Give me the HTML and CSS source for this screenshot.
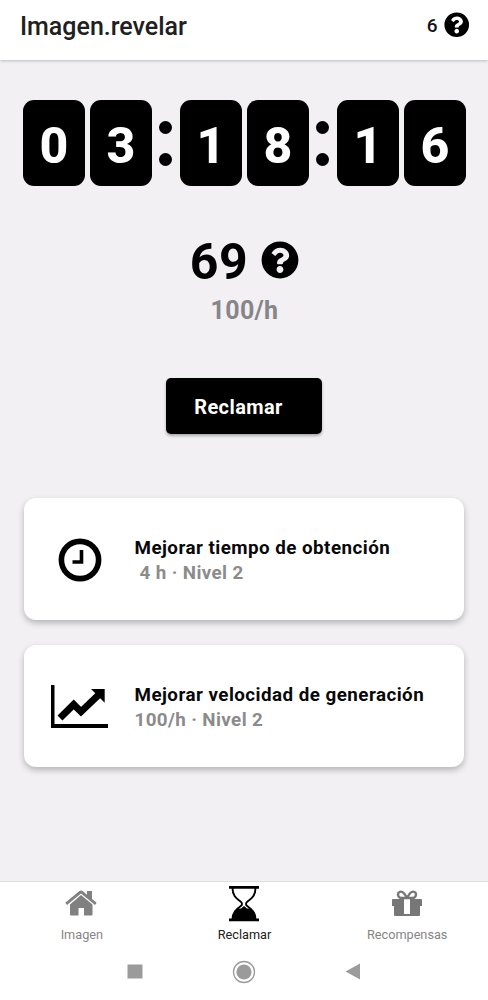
FILE: index.html
```html
<!DOCTYPE html>
<html lang="es">
<head>
<meta charset="utf-8">
<title>Imagen.revelar</title>
<link rel="stylesheet" href="styles.css">
</head>
<body>
<svg width="0" height="0" class="defs">
  <symbol id="question" viewBox="0 0 512 512"><path fill="currentColor" d="M504 256c0 137-111 248-248 248S8 393 8 256C8 119.100 119 8 256 8s248 111.100 248 248zM262.700 90c-54.500 0-89.300 23-116.500 63.800-3.500 5.300-2.400 12.400 2.700 16.300l34.700 26.300c5.200 3.900 12.600 3 16.700-2.100 17.900-22.700 30.100-35.800 57.300-35.800 20.400 0 45.700 13.100 45.700 33 0 15-12.400 22.700-32.500 34C247.100 238.500 216 254.900 216 296v4c0 6.600 5.400 12 12 12h56c6.600 0 12-5.400 12-12v-1.300c0-28.500 83.200-29.600 83.200-106.700 0-58-60.200-102-116.500-102zM256 338c-25.400 0-46 20.600-46 46s20.600 46 46 46 46-20.600 46-46-20.600-46-46-46z"/></symbol>
</svg>
<header class="topbar">
  <h1 class="title">Imagen.revelar</h1>
  <div class="balance"><span>6</span><svg class="balance-icon"><use href="#question"/></svg></div>
</header>
<main class="content">
  <div class="timer">
    <div class="digit">0</div><div class="digit">3</div>
    <div class="colon"><i class="dot"></i><i class="dot"></i></div>
    <div class="digit">1</div><div class="digit">8</div>
    <div class="colon"><i class="dot"></i><i class="dot"></i></div>
    <div class="digit">1</div><div class="digit">6</div>
  </div>
  <div class="amount"><span class="amount-value">69</span><svg class="amount-icon"><use href="#question"/></svg></div>
  <div class="rate">100/h</div>
  <button class="claim">Reclamar</button>
  <section class="card">
    <div class="card-icon">
      <svg width="44" height="44" viewBox="0 0 44 44" fill="none" stroke="#000"><circle cx="22" cy="22" r="18.600" stroke-width="5.600"/><path d="M23.500 12v12h-9" stroke-width="3.600"/></svg>
    </div>
    <div class="card-text"><h2 class="card-title">Mejorar tiempo de obtención</h2><p class="card-sub indented">4 h · Nivel 2</p></div>
  </section>
  <section class="card">
    <div class="card-icon">
      <svg width="58" height="44" viewBox="0 0 58 44"><path d="M0 0h3.500v39H57v4H0z"/><path d="M9 33 22.700 19.500 30 26.700 48 9.500" fill="none" stroke="#000" stroke-width="7"/><path d="M40 4h13.700v13.700z"/></svg>
    </div>
    <div class="card-text"><h2 class="card-title">Mejorar velocidad de generación</h2><p class="card-sub">100/h · Nivel 2</p></div>
  </section>
</main>
<nav class="tabs">
  <div class="tab">
    <svg class="tab-icon" width="32" height="26" viewBox="0 0 32 26" fill="#808080"><path d="M16 5 27.500 14.500V24.500q0 1-1 1h-7.500v-7.500h-5.500v7.500H6q-1 0-1-1v-10z"/><path d="M.3 12.800 14.400 1Q16-.2 17.600 1L22 4.700V1h5v7.900l4.700 3.900-1.700 2.100L16 3.500 2 14.900z"/></svg>
    <span>Imagen</span>
  </div>
  <div class="tab active">
    <svg class="tab-icon" width="30" height="36" viewBox="0 0 30 36"><path d="M0 0h30v2.800H0zM0 32.500h30v2.800H0z"/><path d="M3.500 2c0 8 4 10.500 8 13.500 2 1.500 2 3.300 0 4.800-4 3-8 6-8 13M26.500 2c0 8-4 10.500-8 13.500-2 1.500-2 3.300 0 4.800 4 3 8 6 8 13" fill="none" stroke="#000" stroke-width="1.900"/><path d="M3.500 33c0-5 2-8 5-10.500h3.500L15 20l3 2.500h3.500c3 2.500 5 5.500 5 10.500z"/></svg>
    <span>Reclamar</span>
  </div>
  <div class="tab">
    <svg class="tab-icon" width="30" height="27" viewBox="0 0 30 27"><path fill="#777" d="M1 9h28q1 0 1 1v6h-2v9q0 1-1 1H3q-1 0-1-1v-9H0v-6q0-1 1-1z"/><path fill="#fff" d="M12 9h6v15h-6z"/><path d="M15 8C12 2 9.500 1 7.500 2 5 3.200 5.800 8 9.500 8zM15 8c3-6 5.500-7 7.500-6 2.500 1.200 1.700 6-2 6z" fill="#fff" stroke="#777" stroke-width="2.400"/></svg>
    <span>Recompensas</span>
  </div>
</nav>
<footer class="system">
  <svg width="16" height="16"><path fill="#9b9b9b" d="M.5 .5h15v14H.5z"/></svg>
  <svg width="24" height="24"><circle cx="12" cy="12" r="10.500" fill="none" stroke="#9b9b9b" stroke-width="1.300"/><circle cx="12" cy="12" r="7.600" fill="#9b9b9b"/></svg>
  <svg width="16" height="18"><path fill="#9b9b9b" d="M15 .5v16L.5 8.500z"/></svg>
</footer>
</body>
</html>
```
FILE: styles.css
```css
* { box-sizing: border-box; margin: 0; padding: 0; }
body { width: 488px; height: 1000px; display: flex; flex-direction: column; background: #f2f0f3; font-family: Roboto, sans-serif; overflow: hidden; }
.defs { position: absolute; }
.topbar { height: 60px; flex: none; display: flex; justify-content: space-between; align-items: flex-start; padding: 12px 19px 0 20px; background: #fff; box-shadow: 0 1px 3px rgba(0, 0, 0, .22); }
.title { font-size: 25px; line-height: 30px; font-weight: 500; color: #202020; }
.balance { display: flex; align-items: center; gap: 6px; height: 26px; font-size: 19px; font-weight: 500; color: #151515; }
.balance-icon { width: 25.500px; height: 25.500px; color: #000; }
.content { flex: 1; display: flex; flex-direction: column; align-items: center; padding-top: 40px; }
.timer { display: flex; gap: 5px; width: 443px; height: 86px; }
.digit { width: 62px; flex: none; height: 86px; border-radius: 11px; background: #000; color: #fff; font-size: 50px; line-height: 92px; font-weight: 800; text-align: center; padding-left: 1px; }
.colon { width: 18px; flex: none; display: flex; flex-direction: column; align-items: center; gap: 19.500px; padding-top: 20.500px; }
.dot { width: 13px; height: 13px; border-radius: 50%; background: #000; }
.amount { display: flex; align-items: center; gap: 13px; height: 60px; margin-top: 46px; padding-left: 1px; }
.amount-value { font-size: 50px; font-weight: 700; line-height: 60px; letter-spacing: .6px; }
.amount-icon { width: 38px; height: 38px; margin-top: -5px; }
.rate { font-size: 25px; line-height: 30px; font-weight: 700; letter-spacing: .3px; color: #878588; margin-top: 4px; padding-left: 1px; }
.claim { width: 156px; height: 56px; margin-top: 52px; border: 0; border-radius: 5px; background: #000; color: #fff; font: 700 20px/56px Roboto, sans-serif; letter-spacing: .4px; padding: 1px 11px 0 0; box-shadow: 0 2px 3px rgba(0, 0, 0, .3); }
.card { width: 440px; height: 122px; margin-top: 64px; display: flex; align-items: center; background: #fff; border-radius: 12px; box-shadow: 0 3px 6px rgba(0, 0, 0, .26); }
.card + .card { margin-top: 25px; }
.card-icon { width: 110.500px; height: 43px; padding-left: 1px; display: flex; justify-content: center; }
.card-text { padding-top: 4px; }
.card-title { font-size: 18.800px; line-height: 25px; font-weight: 700; letter-spacing: .46px; color: #080808; }
.card-sub { font-size: 18.800px; line-height: 25px; font-weight: 700; letter-spacing: .38px; color: #8b8b8b; }
.indented { padding-left: 5px; }
.tabs { height: 63px; flex: none; display: flex; justify-content: space-between; background: #fff; border-top: 1px solid #dedde0; }
.tab { width: 163px; display: flex; flex-direction: column; align-items: center; justify-content: space-between; padding: 8px 0 0; font-size: 12.700px; line-height: 18px; color: #858585; }
.tab span { padding-left: 1px; }
.active { color: #202020; padding-top: 4px; }
.system { height: 56px; flex: none; display: flex; align-items: center; justify-content: center; gap: 89px; padding-bottom: 1px; background: #fff; }
```
